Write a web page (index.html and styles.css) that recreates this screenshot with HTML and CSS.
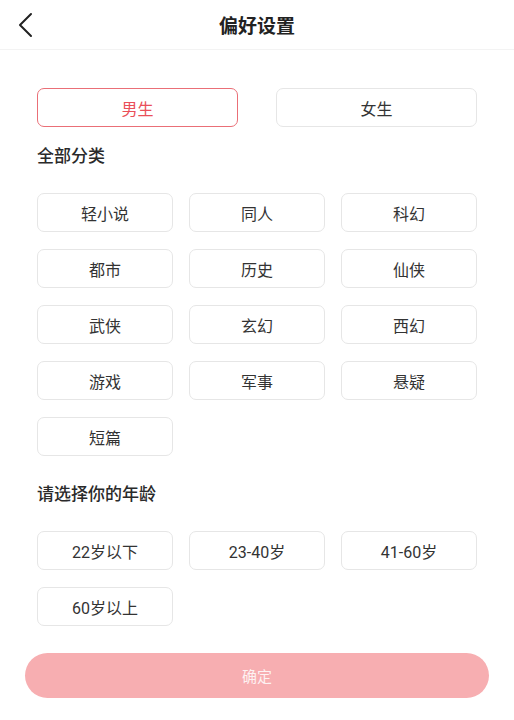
FILE: index.html
```html
<!DOCTYPE html>
<html lang="zh-CN">
<head>
<meta charset="utf-8">
<title>偏好设置</title>
<link rel="stylesheet" href="styles.css">
</head>
<body>
<div class="page">
  <header class="header">
    <button class="back" aria-label="返回">
      <svg width="16" height="26" viewBox="0 0 16 26"><path d="M14 2 L3 13 L14 24" fill="none" stroke="#222" stroke-width="2" stroke-linecap="round" stroke-linejoin="round"/></svg>
    </button>
    <h1 class="title">偏好设置</h1>
  </header>
  <main class="content">
    <div class="gender">
      <div class="chip chip-active">男生</div>
      <div class="chip">女生</div>
    </div>
    <div class="label label-first">全部分类</div>
    <div class="grid grid-cat">
      <div class="chip">轻小说</div>
      <div class="chip">同人</div>
      <div class="chip">科幻</div>
      <div class="chip">都市</div>
      <div class="chip">历史</div>
      <div class="chip">仙侠</div>
      <div class="chip">武侠</div>
      <div class="chip">玄幻</div>
      <div class="chip">西幻</div>
      <div class="chip">游戏</div>
      <div class="chip">军事</div>
      <div class="chip">悬疑</div>
      <div class="chip">短篇</div>
    </div>
    <div class="label label-age">请选择你的年龄</div>
    <div class="grid grid-age">
      <div class="chip">22岁以下</div>
      <div class="chip">23-40岁</div>
      <div class="chip">41-60岁</div>
      <div class="chip">60岁以上</div>
    </div>
  </main>
  <div class="footer">
    <button class="confirm">确定</button>
  </div>
</div>
</body>
</html>
```
FILE: styles.css
```css
html, body {
  margin: 0;
  padding: 0;
  background: #fff;
}
body {
  font-family: Roboto, "Noto Sans CJK SC", "Noto Sans", sans-serif;
  color: #333;
}
.page {
  width: 514px;
}
.header {
  position: relative;
  height: 49px;
  border-bottom: 1px solid #f3f3f3;
  display: flex;
  align-items: center;
  justify-content: center;
}
.back {
  position: absolute;
  left: 17px;
  top: 12px;
  padding: 0;
  border: 0;
  background: none;
  display: flex;
}
.title {
  margin: 0;
  font-size: 19px;
  font-weight: 700;
  color: #222;
}
.content {
  padding: 0 37px;
}
.gender {
  margin-top: 38px;
  display: grid;
  grid-template-columns: 1fr 1fr;
  column-gap: 38px;
}
.chip {
  height: 39px;
  box-sizing: border-box;
  border: 1px solid #e6e6e6;
  border-radius: 7px;
  display: flex;
  align-items: center;
  justify-content: center;
  font-size: 16px;
  color: #333;
}
.chip-active {
  border-color: #ea6f77;
  color: #ea4f59;
}
.label {
  font-size: 17px;
  font-weight: 500;
  line-height: 22px;
  color: #2a2a2a;
}
.label-first {
  margin-top: 18px;
}
.label-age {
  margin-top: 27px;
}
.grid {
  display: grid;
  grid-template-columns: repeat(3, 136px);
  column-gap: 16px;
  row-gap: 17px;
}
.grid-cat {
  margin-top: 26px;
}
.grid-age {
  margin-top: 26px;
}
.footer {
  padding: 27px 25px 0;
}
.confirm {
  width: 464px;
  height: 45px;
  border: 0;
  border-radius: 23px;
  background: #f7aeb1;
  color: rgba(255, 255, 255, 0.85);
  font-family: Roboto, "Noto Sans CJK SC", sans-serif;
  font-size: 15px;
  display: block;
}
```
